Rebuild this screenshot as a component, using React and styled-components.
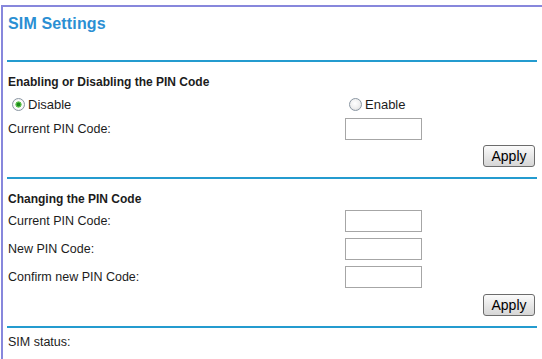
import React from 'react';
import styled, { createGlobalStyle } from 'styled-components';

const Global = createGlobalStyle`
  html, body { margin: 0; padding: 0; background: #fff; }
  body { font-family: "Liberation Sans", Arial, sans-serif; color: #1c1c1c; }
`;

const Frame = styled.div`
  margin: 5px 0 0 1px;
  border-top: 2px solid #8787dc;
  border-left: 2px solid #8787dc;
  padding: 0 5px 0 4px;
  min-height: calc(100vh - 5px);
  box-sizing: border-box;
`;

const TitleBar = styled.div`
  height: 53px;
  box-sizing: border-box;
  padding: 7px 0 0 1px;
`;

const Title = styled.h1`
  margin: 0;
  font-size: 16px;
  line-height: 20px;
  font-weight: bold;
  letter-spacing: 0.15px;
  color: #2b8fd3;
`;

const Divider = styled.div`
  height: 2px;
  background: #249bcf;
  margin-top: ${p => p.$gap || 0}px;
`;

const Section = styled.div`
  padding-top: ${p => p.$pad}px;
`;

const Row = styled.div`
  display: flex;
  align-items: center;
  justify-content: ${p => (p.$end ? 'flex-end' : 'flex-start')};
  height: ${p => p.$h}px;
  padding-left: 1px;
`;

const Heading = styled.div`
  font-size: 12px;
  font-weight: bold;
  color: #1c1c1c;
`;

const Label = styled.div`
  width: 337px;
  flex: none;
  font-size: 12.5px;
  color: #1c1c1c;
`;

const Cell = styled.div`
  display: flex;
  align-items: center;
  width: ${p => p.$w || 'auto'};
  flex: none;
`;

const Radio = styled.input.attrs({ type: 'radio' })`
  appearance: none;
  -webkit-appearance: none;
  width: 13px;
  height: 13px;
  margin: 0 3px 0 4px;
  border-radius: 50%;
  border: 1px solid #8a96a2;
  box-sizing: border-box;
  background: radial-gradient(circle at 45% 40%, #ffffff 0%, #eeeeee 55%, #cfcfcf 100%);
  &:checked {
    background: radial-gradient(circle, #1b8a1b 0 1.6px, #5cbf4a 2.2px 2.8px, #ffffff 3.4px, #e6e6e6 100%);
  }
`;

const RadioText = styled.span`
  font-size: 13px;
  color: #1c1c1c;
`;

const TextBox = styled.input.attrs({ type: 'text' })`
  width: 77px;
  height: 22px;
  margin: 0;
  padding: 0 2px;
  box-sizing: border-box;
  border: 1px solid #a6a6a6;
  background: #fff;
`;

const ApplyButton = styled.button`
  width: 52px;
  height: 22px;
  margin: 0 2px 0 0;
  padding: 0;
  border: 1px solid #6c6c6c;
  border-radius: 3px;
  background: linear-gradient(#fbfbfb, #e4e4e4 60%, #d6d6d6);
  font-family: "Liberation Sans", Arial, sans-serif;
  font-size: 14px;
  color: #000;
`;

const Field = ({ label }) => (
  <Row $h={28}>
    <Label>{label}</Label>
    <TextBox />
  </Row>
);

export default function App() {
  return (
    <>
      <Global />
      <Frame>
        <TitleBar>
          <Title>SIM Settings</Title>
        </TitleBar>
        <Divider />
        <Section $pad={12}>
          <Row $h={16}>
            <Heading>Enabling or Disabling the PIN Code</Heading>
          </Row>
          <Row $h={28}>
            <Cell $w="337px">
              <Radio name="pin" defaultChecked />
              <RadioText>Disable</RadioText>
            </Cell>
            <Cell>
              <Radio name="pin" />
              <RadioText>Enable</RadioText>
            </Cell>
          </Row>
          <Row $h={22}>
            <Label>Current PIN Code:</Label>
            <TextBox />
          </Row>
          <Row $h={32} $end>
            <ApplyButton>Apply</ApplyButton>
          </Row>
        </Section>
        <Divider $gap={5} />
        <Section $pad={12}>
          <Row $h={16}>
            <Heading>Changing the PIN Code</Heading>
          </Row>
          <Field label="Current PIN Code:" />
          <Field label="New PIN Code:" />
          <Field label="Confirm new PIN Code:" />
          <Row $h={28} $end>
            <ApplyButton>Apply</ApplyButton>
          </Row>
        </Section>
        <Divider $gap={7} />
        <Section $pad={4}>
          <Row $h={20}>
            <Label>SIM status:</Label>
          </Row>
        </Section>
      </Frame>
    </>
  );
}
